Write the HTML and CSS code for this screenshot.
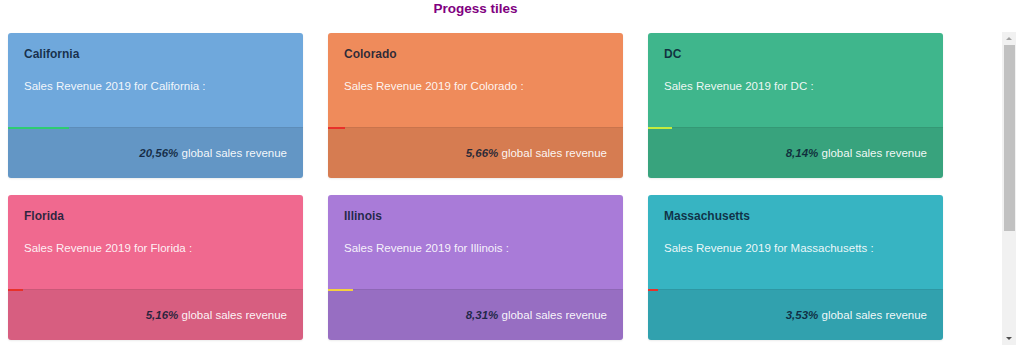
FILE: index.html
```html
<!DOCTYPE html>
<html lang="en">
<head>
  <meta charset="UTF-8" />
  <title>Progess tiles</title>
  <link rel="stylesheet" href="styles.css">
</head>
<body>

<div class="page">
  <div class="content">
    <h1>Progess tiles</h1>

    <div id="tiles">
      <div class="tile california">
        <div class="tile-top">
          <div class="name">California</div>
          <div class="desc">Sales Revenue 2019 for California :</div>
        </div>
        <div class="tile-bottom">
          <div class="bar green" style="width: 20.56%"></div>
          <span class="pct">20,56%</span> global sales revenue
        </div>
      </div>

      <div class="tile colorado">
        <div class="tile-top">
          <div class="name">Colorado</div>
          <div class="desc">Sales Revenue 2019 for Colorado :</div>
        </div>
        <div class="tile-bottom">
          <div class="bar red" style="width: 5.66%"></div>
          <span class="pct">5,66%</span> global sales revenue
        </div>
      </div>

      <div class="tile dc">
        <div class="tile-top">
          <div class="name">DC</div>
          <div class="desc">Sales Revenue 2019 for DC :</div>
        </div>
        <div class="tile-bottom">
          <div class="bar lime" style="width: 8.14%"></div>
          <span class="pct">8,14%</span> global sales revenue
        </div>
      </div>

      <div class="tile florida">
        <div class="tile-top">
          <div class="name">Florida</div>
          <div class="desc">Sales Revenue 2019 for Florida :</div>
        </div>
        <div class="tile-bottom">
          <div class="bar red" style="width: 5.16%"></div>
          <span class="pct">5,16%</span> global sales revenue
        </div>
      </div>

      <div class="tile illinois">
        <div class="tile-top">
          <div class="name">Illinois</div>
          <div class="desc">Sales Revenue 2019 for Illinois :</div>
        </div>
        <div class="tile-bottom">
          <div class="bar yellow" style="width: 8.31%"></div>
          <span class="pct">8,31%</span> global sales revenue
        </div>
      </div>

      <div class="tile massachusetts">
        <div class="tile-top">
          <div class="name">Massachusetts</div>
          <div class="desc">Sales Revenue 2019 for Massachusetts :</div>
        </div>
        <div class="tile-bottom">
          <div class="bar red" style="width: 3.53%"></div>
          <span class="pct">3,53%</span> global sales revenue
        </div>
      </div>
    </div>
  </div>

  <!-- fake scrollbar of the tiles panel -->
  <div class="scrollbar">
    <div class="arrow up"></div>
    <div class="thumb"></div>
    <div class="arrow down"></div>
  </div>
</div>

</body>
</html>
```

FILE: styles.css
```css
body {
  margin: 0;
  font-family: "Liberation Sans", Arial, sans-serif;
  background: white;
}

.page {
  display: flex;
  align-items: flex-start;
}

.content {
  width: 951px;
}

h1 {
  margin: 0;
  padding-top: 1px;
  height: 33px;
  box-sizing: border-box;
  text-align: center;
  font-size: 13.5px;
  font-weight: bold;
  color: #800080;
}

#tiles {
  display: grid;
  grid-template-columns: repeat(3, 295px);
  column-gap: 25px;
  row-gap: 17px;
  padding-left: 8px;
}

.tile {
  height: 145px;
  border-radius: 3px;
  overflow: hidden;
  display: flex;
  flex-direction: column;
  box-shadow: 0 1px 2px rgba(0, 0, 0, 0.08);
}

.tile-top {
  height: 94px;
  box-sizing: border-box;
  padding: 14px 16px 0 16px;
}

.name {
  font-size: 12px;
  font-weight: bold;
  color: rgba(10, 25, 50, 0.85);
}

.desc {
  margin-top: 19px;
  font-size: 11.5px;
  color: rgba(255, 255, 255, 0.92);
}

.tile-bottom {
  flex: 1;
  position: relative;
  background: rgba(0, 0, 0, 0.1);
  border-top: 1px solid rgba(0, 0, 0, 0.06);
  text-align: right;
  padding: 19px 16px 0 0;
  font-size: 11.5px;
  color: rgba(255, 255, 255, 0.95);
}

.bar {
  position: absolute;
  left: 0;
  top: -1px;
  height: 2px;
}

.pct {
  font-weight: bold;
  font-style: italic;
  color: rgba(10, 25, 50, 0.85);
}

.green { background: #2ecc71; }
.red { background: #e8312a; }
.lime { background: #c4ec3c; }
.yellow { background: #f4d03f; }

.california { background: #6fa8dc; }
.colorado { background: #ef8b5b; }
.dc { background: #3fb68c; }
.florida { background: #f0698f; }
.illinois { background: #a97bd8; }
.massachusetts { background: #37b4c2; }

.scrollbar {
  margin-left: 51px;
  margin-top: 32px;
  width: 14px;
  height: 313px;
  background: #f1f1f1;
  display: flex;
  flex-direction: column;
  align-items: center;
}

.arrow {
  width: 0;
  height: 0;
  border-left: 3px solid transparent;
  border-right: 3px solid transparent;
}

.arrow.up {
  margin-top: 5px;
  border-bottom: 3px solid #a3a3a3;
}

.arrow.down {
  margin-top: auto;
  margin-bottom: 5px;
  border-top: 3px solid #505050;
}

.thumb {
  margin-top: 5px;
  width: 11px;
  height: 186px;
  background: #c1c1c1;
}
```
